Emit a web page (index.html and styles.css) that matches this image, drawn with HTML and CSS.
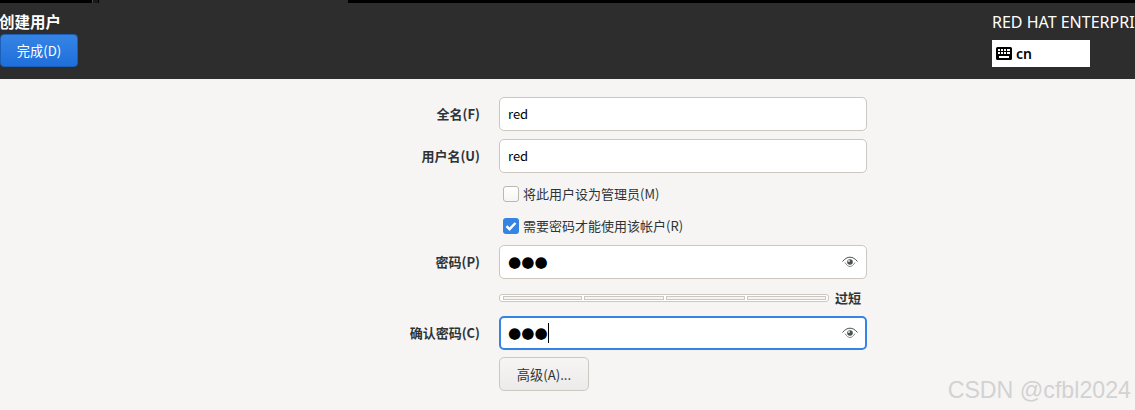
FILE: index.html
```html
<!DOCTYPE html>
<html lang="zh">
<head>
<meta charset="utf-8">
<title>创建用户</title>
<link rel="stylesheet" href="styles.css">
</head>
<body>
<header class="header">
  <div class="topbar"><span class="tab-sliver"></span><span class="tab"></span></div>
  <div class="header-main">
    <div class="header-left">
      <h1 class="title">创建用户</h1>
      <button class="done">完成(D)</button>
    </div>
    <div class="header-right">
      <div class="product">RED HAT ENTERPRI</div>
      <div class="layout">
        <svg class="kbd" viewBox="0 0 16 13" width="16" height="13"><path fill="#000" fill-rule="evenodd" d="M1.500 0h13A1.500 1.500 0 0 1 16 1.500v10a1.500 1.500 0 0 1-1.500 1.500h-13A1.500 1.500 0 0 1 0 11.500v-10A1.500 1.500 0 0 1 1.500 0zM2 2v2h2V2zm3 0v2h2V2zm3 0v2h2V2zm3 0v2h3V2zM2 5v2h2V5zm3 0v2h2V5zm3 0v2h2V5zm3 0v2h3V5zM3 9v2h10V9z"/></svg>
        <span>cn</span>
      </div>
    </div>
  </div>
</header>
<main class="form">
  <label class="label">全名(F)</label>
  <div class="entry"><span class="value">red</span></div>

  <label class="label">用户名(U)</label>
  <div class="entry"><span class="value">red</span></div>

  <div class="check-row check-first"><span class="box"></span><span>将此用户设为管理员(M)</span></div>
  <div class="check-row check-second">
    <span class="box box-on"><svg viewBox="0 0 16 16" width="16" height="16"><path d="M3.500 8.200l3 3 6-6.200" fill="none" stroke="#fff" stroke-width="2.400"/></svg></span>
    <span>需要密码才能使用该帐户(R)</span>
  </div>

  <label class="label">密码(P)</label>
  <div class="entry entry-pw">
    <span class="dots">●●●</span>
    <svg class="eye" viewBox="0 0 16 12" width="16" height="12"><path d="M.5 5.500C3 2.500 5.500 1.200 8 1.200s5 1.300 7.500 4.300" fill="none" stroke="#4a4f50" stroke-width="1"/><path d="M3 6.500C4.500 9 6.200 10.500 8 10.500s3.500-1.500 5-4" fill="none" stroke="#6a6e6f" stroke-width=".8"/><circle cx="8" cy="6" r="2.800" fill="#4a4f50"/><circle cx="7" cy="5" r="1" fill="#e8e8e6"/></svg>
  </div>

  <div class="strength-row">
    <div class="meter"><i></i><i></i><i></i><i></i></div>
    <span class="strength-text">过短</span>
  </div>

  <label class="label">确认密码(C)</label>
  <div class="entry entry-pw entry-focus">
    <span class="dots">●●●</span><span class="caret"></span>
    <svg class="eye" viewBox="0 0 16 12" width="16" height="12"><path d="M.5 5.500C3 2.500 5.500 1.200 8 1.200s5 1.300 7.500 4.300" fill="none" stroke="#4a4f50" stroke-width="1"/><path d="M3 6.500C4.500 9 6.200 10.500 8 10.500s3.500-1.500 5-4" fill="none" stroke="#6a6e6f" stroke-width=".8"/><circle cx="8" cy="6" r="2.800" fill="#4a4f50"/><circle cx="7" cy="5" r="1" fill="#e8e8e6"/></svg>
  </div>

  <button class="advanced">高级(A)...</button>
</main>
<div class="watermark">CSDN @cfbl2024</div>
</body>
</html>
```

FILE: styles.css
```css
* { box-sizing: border-box; }
html, body { margin: 0; height: 100%; }
body {
  position: relative;
  width: 1135px;
  height: 410px;
  overflow: hidden;
  background: #f6f5f4;
  color: #2e3436;
  font-family: "Noto Sans CJK SC", "Noto Sans", sans-serif;
  font-size: 13px;
}
.header { height: 79px; background: #2d2d2d; color: #fff; }
.topbar { height: 3px; background: #000; display: flex; }
.tab-sliver { width: 6px; margin-left: 92px; margin-right: 1px; background: #1a1a1a; border-left: 1px solid #444; }
.tab { width: 249px; background: #2d2d2d; }
.header-main { display: flex; justify-content: space-between; }
.header-left { width: 78px; }
.title {
  margin: 0 0 0 -1px;
  height: 31px;
  padding-top: 8px;
  font-size: 15.5px;
  line-height: 20px;
  font-weight: 700;
  white-space: nowrap;
}
.done {
  display: block;
  width: 78px;
  height: 33px;
  padding: 0;
  border: 1px solid #1b5fb8;
  border-radius: 4px;
  background: linear-gradient(#3584e4, #1f6fdc);
  color: #fff;
  font: 13.2px "Noto Sans CJK SC", "Noto Sans", sans-serif;
}
.header-right { width: 143px; white-space: nowrap; }
.product { height: 37px; padding-top: 9px; font-family: "Noto Sans", sans-serif; font-size: 16px; line-height: 20px; }
.layout {
  width: 98px;
  height: 27px;
  background: #fff;
  color: #000;
  display: flex;
  align-items: center;
  gap: 4px;
  padding-left: 4px;
  font-family: "Noto Sans", sans-serif;
  font-size: 14px;
  font-weight: 600;
}
.form {
  display: grid;
  grid-template-columns: 480px 368px;
  column-gap: 19px;
  padding-top: 18px;
}
.label {
  grid-column: 1;
  height: 34px;
  line-height: 34px;
  text-align: right;
  font-weight: 700;
  color: #2e3436;
}
.entry {
  grid-column: 2;
  height: 34px;
  margin-bottom: 8px;
  padding: 0 8px;
  background: #fff;
  border: 1px solid #cdc7c2;
  border-radius: 5px;
  display: flex;
  align-items: center;
  position: relative;
}
.value { color: #000; padding-bottom: 2px; }
.check-row {
  grid-column: 2;
  display: flex;
  align-items: center;
  height: 16px;
  padding-left: 4px;
  gap: 4px;
  line-height: 14px;
}
.check-first { margin-top: 5px; margin-bottom: 16px; }
.check-second { margin-bottom: 11px; }
.box {
  width: 16px;
  height: 16px;
  border: 1px solid #bdb7b2;
  border-radius: 3px;
  background: linear-gradient(#fff, #f6f5f4);
}
.box-on { border: 0; background: #3584e4; }
.box-on svg { display: block; }
.entry-pw { margin-bottom: 0; }
.dots { font-size: 15.2px; line-height: 1; color: #000; font-family: "DejaVu Sans", sans-serif; margin-top: 1px; }
.caret { width: 1px; height: 20px; background: #000; margin-left: 0; }
.eye { position: absolute; right: 8px; top: 10px; }
.entry-focus { border: 2px solid #3584e4; padding: 0 7px; }
.entry-focus .eye { right: 7px; top: 9px; }
.strength-row {
  grid-column: 2;
  display: flex;
  align-items: center;
  height: 7px;
  margin-top: 15px;
  margin-bottom: 15px;
  gap: 6px;
  font-weight: 700;
  white-space: nowrap;
}
.meter {
  width: 330px;
  height: 8px;
  padding: 1px 2px 1px 3px;
  display: flex;
  gap: 2px;
  border: 1px solid #cdc7c2;
  border-radius: 3px;
  background: #fff;
}
.meter i { flex: 1; border: 1px solid #cdc7c2; background: #f6f5f4; }
.strength-text { line-height: 7px; }
.advanced {
  grid-column: 2;
  justify-self: start;
  width: 90px;
  height: 34px;
  margin-top: 7px;
  padding: 0;
  border: 1px solid #cdc7c2;
  border-radius: 5px;
  background: linear-gradient(#f6f5f4, #edebe9);
  color: #2e3436;
  font: 13.2px "Noto Sans CJK SC", "Noto Sans", sans-serif;
}
.watermark {
  position: absolute;
  right: 4px;
  bottom: 6px;
  font-family: "Liberation Sans", sans-serif;
  font-size: 23.2px;
  line-height: 28px;
  color: #d2d2d2;
  white-space: nowrap;
}
```
